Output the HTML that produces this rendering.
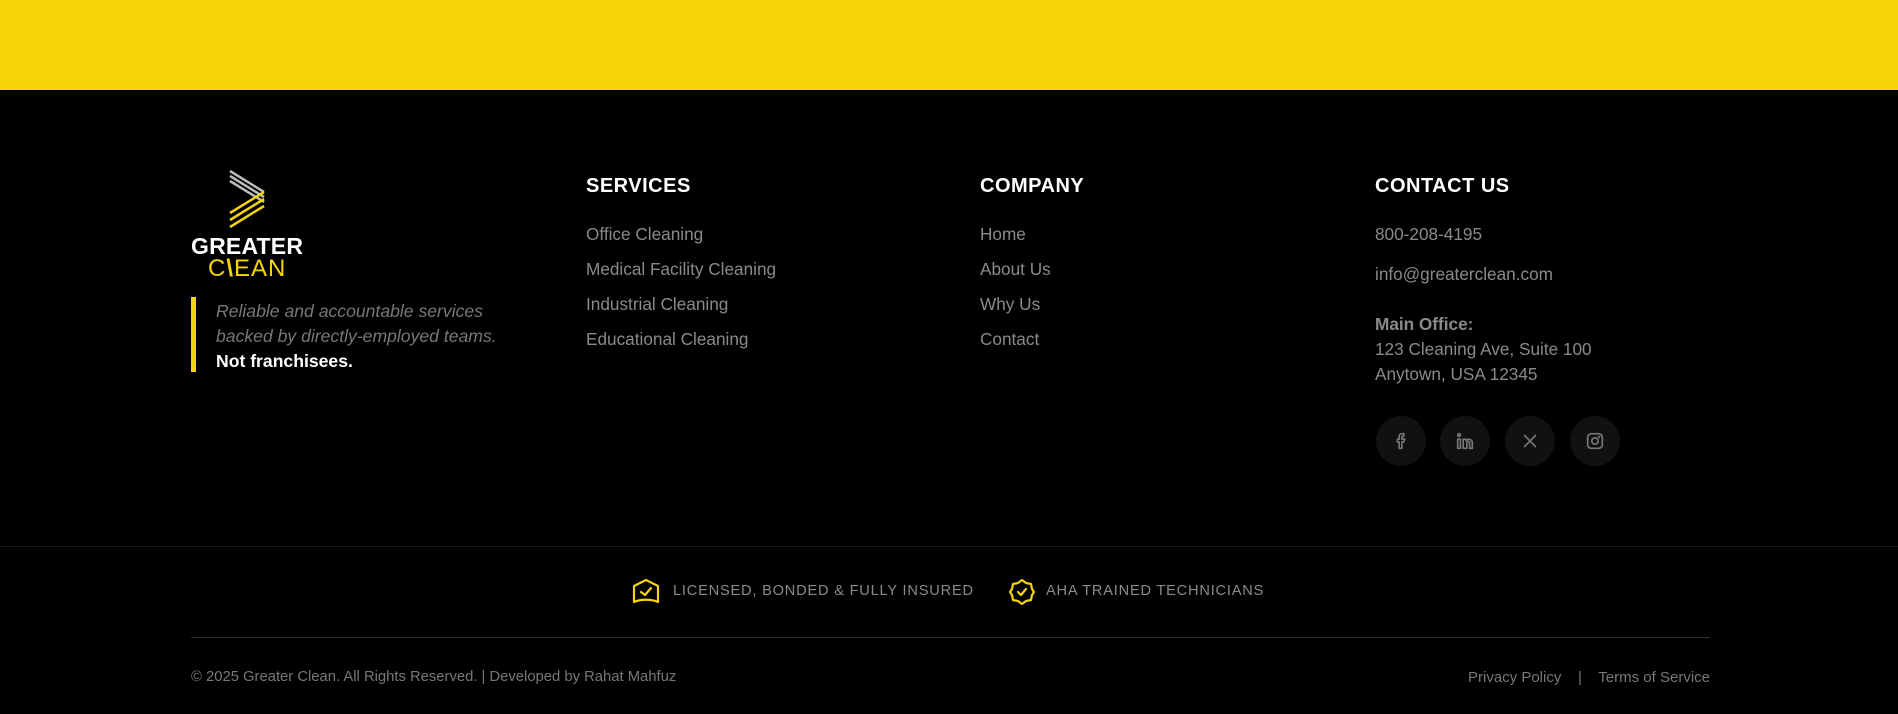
<!DOCTYPE html>
<html><head><meta charset="utf-8"><style>
*{margin:0;padding:0;box-sizing:border-box}
body{width:1898px;height:714px;background:#000;font-family:"Liberation Sans",sans-serif;position:relative;overflow:hidden;color:#8a8a8a}
.top{position:absolute;left:0;top:0;width:1898px;height:90px;background:#f5d50a}
.a{position:absolute;white-space:nowrap}
h4{position:absolute;color:#fff;font-size:20px;font-weight:bold;letter-spacing:0.5px;top:175px}
.l{position:absolute;font-size:17.2px;color:#8a8a8a;white-space:nowrap}
.soc{position:absolute;top:416px;width:50px;height:50px;border-radius:50%;background:#111;display:flex;align-items:center;justify-content:center}
.soc svg{width:22px;height:22px;fill:none;stroke:#777;stroke-width:1.8;stroke-linecap:round;stroke-linejoin:round}
.b{font-size:14.6px;letter-spacing:0.8px;color:#8a8a8a;top:583px}
</style></head><body>
<div class="top"></div>
<svg class="a" style="left:228px;top:170px" width="40" height="60" viewBox="0 0 40 60">
<g stroke="#bbb" stroke-width="2.5"><line x1="2" y1="1" x2="36" y2="22"/><line x1="2" y1="6" x2="36" y2="27"/><line x1="2" y1="11" x2="36" y2="32"/></g>
<g stroke="#f5d50a" stroke-width="2.5"><line x1="2" y1="43" x2="36" y2="22"/><line x1="2" y1="50" x2="36" y2="29"/><line x1="2" y1="57" x2="36" y2="36"/></g>
</svg>
<div class="a" style="left:191px;top:233px;font-size:23px;font-weight:bold;color:#fff;letter-spacing:0.2px">GREATER</div>
<div class="a" style="left:208px;top:255px;font-size:24px;color:#f5d50a;letter-spacing:1px">C<span style="font-weight:bold">\</span>EAN</div>
<div class="a" style="left:191px;top:297px;width:5px;height:75px;background:#f5d50a"></div>
<div class="a" style="left:216px;top:299px;font-size:17.6px;font-style:italic;line-height:25px;color:#777">Reliable and accountable services<br>backed by directly-employed teams.<br><span style="font-style:normal;font-weight:bold;color:#fff">Not franchisees.</span></div>

<h4 style="left:586px">SERVICES</h4>
<div class="l" style="left:586px;top:224px">Office Cleaning</div>
<div class="l" style="left:586px;top:259px">Medical Facility Cleaning</div>
<div class="l" style="left:586px;top:294px">Industrial Cleaning</div>
<div class="l" style="left:586px;top:329px">Educational Cleaning</div>

<h4 style="left:980px">COMPANY</h4>
<div class="l" style="left:980px;top:224px">Home</div>
<div class="l" style="left:980px;top:259px">About Us</div>
<div class="l" style="left:980px;top:294px">Why Us</div>
<div class="l" style="left:980px;top:329px">Contact</div>

<h4 style="left:1375px">CONTACT US</h4>
<div class="l" style="left:1375px;top:224px">800-208-4195</div>
<div class="l" style="left:1375px;top:264px">info@greaterclean.com</div>
<div class="l" style="left:1375px;top:314px;font-weight:bold">Main Office:</div>
<div class="l" style="left:1375px;top:339px">123 Cleaning Ave, Suite 100</div>
<div class="l" style="left:1375px;top:364px">Anytown, USA 12345</div>

<div class="soc" style="left:1376px"><svg viewBox="0 0 24 24"><path d="M15 4h-2a3 3 0 0 0-3 3v3H8v3h2v7h3v-7h2l1-3h-3V7.5a.5.5 0 0 1 .5-.5H15z"/></svg></div>
<div class="soc" style="left:1440px"><svg viewBox="0 0 24 24"><rect x="4" y="10" width="3" height="10"/><circle cx="5.5" cy="5.5" r="1.5"/><path d="M10 20V10h3v1.5a4 4 0 0 1 7 2.5V20h-3v-6a1.5 1.5 0 0 0-3 0v6z"/></svg></div>
<div class="soc" style="left:1505px"><svg viewBox="0 0 24 24"><path d="M6 6l12 12M18 6L6 18"/></svg></div>
<div class="soc" style="left:1570px"><svg viewBox="0 0 24 24"><rect x="4" y="4" width="16" height="16" rx="4"/><circle cx="12" cy="12" r="3.5"/><circle cx="16.5" cy="7.5" r=".5"/></svg></div>

<div class="a" style="left:0;top:546px;width:1898px;height:1px;background:#1c1c1c"></div>
<svg class="a" style="left:631px;top:578px" width="30" height="28" viewBox="0 0 30 28" fill="none" stroke="#f5d50a" stroke-width="2.2" stroke-linejoin="round" stroke-linecap="round"><path d="M3 8l12-6 12 6v16c-6-3-18-3-24 0z"/><path d="M10 14l4 3 6-7"/></svg>
<div class="a b" style="left:673px">LICENSED, BONDED &amp; FULLY INSURED</div>
<svg class="a" style="left:1008px;top:578px" width="28" height="28" viewBox="0 0 28 28" fill="none" stroke="#f5d50a" stroke-width="2.2" stroke-linejoin="round" stroke-linecap="round"><path d="M14 2l4 3 5 1 1 5 2 3-2 3-1 5-5 1-4 3-4-3-5-1-1-5-2-3 2-3 1-5 5-1z"/><path d="M10 14l3 3 5-6"/></svg>
<div class="a b" style="left:1046px">AHA TRAINED TECHNICIANS</div>

<div class="a" style="left:191px;top:637px;width:1519px;height:1px;background:#2a3038"></div>
<div class="a" style="left:191px;top:669px;font-size:14.8px;color:#777">© 2025 Greater Clean. All Rights Reserved. | Developed by Rahat Mahfuz</div>
<div class="a" style="right:188px;top:669px;font-size:15px;color:#777">Privacy Policy &nbsp;&nbsp;&nbsp;|&nbsp;&nbsp;&nbsp; Terms of Service</div>
</body></html>
